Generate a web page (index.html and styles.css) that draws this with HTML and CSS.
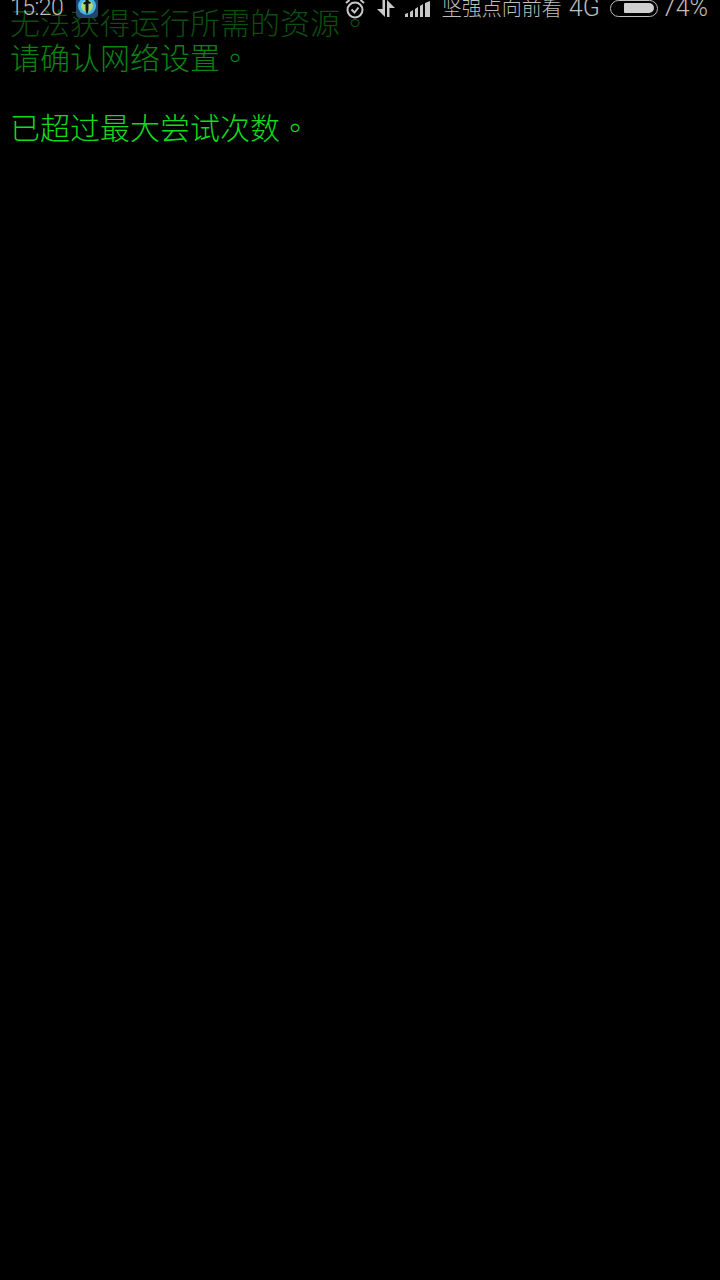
FILE: index.html
```html
<!DOCTYPE html>
<html lang="zh-CN">
<head>
<meta charset="utf-8">
<title>资源</title>
<link rel="stylesheet" href="styles.css">
</head>
<body>
<main class="log">
  <p class="line faint">无法获得运行所需的资源<span class="stop" lang="zh-TW">。</span></p>
  <p class="line mid">请确认网络设置<span class="stop" lang="zh-TW">。</span></p>
  <p class="line blank">&nbsp;</p>
  <p class="line bright">已超过最大尝试次数<span class="stop" lang="zh-TW">。</span></p>
</main>
<header class="status">
  <div class="left">
    <span class="time">15:20</span>
    <svg class="app" viewBox="0 0 22 20" width="22" height="20">
      <rect x="0" y="-3" width="22" height="23" rx="4" fill="#24456b"/>
      <circle cx="11" cy="8" r="9" fill="#45b6e8"/>
      <circle cx="11" cy="8" r="6" fill="#b9d86a"/>
      <path d="M9.500 -1h3v4l2.500 1.500-1 1.500-1.500-.5V12l-1.500 5-1.500-5V6l-1.500.5-1-1.500 2.500-1.500z" fill="#0b1418"/>
    </svg>
  </div>
  <div class="right">
    <svg class="alarm" viewBox="0 0 20 20" width="20" height="20" fill="none" stroke="#c8c8c8" stroke-width="2">
      <circle cx="10" cy="11" r="7.500"/>
      <path d="M6.500 10.500l3 3 4-5"/>
      <path d="M1 4l3.500-3M19 4l-3.500-3"/>
    </svg>
    <svg class="arrows" viewBox="0 0 18 17" width="18" height="17" fill="#c8c8c8">
      <path d="M5.500 0h2.500v17L0 9h5.500z"/>
      <path d="M10 0l8 8h-5.500v9H10z"/>
    </svg>
    <svg class="signal" viewBox="0 0 25 16" width="25" height="16" fill="#c8c8c8">
      <path d="M0 13l3-1v4H0z"/>
      <path d="M5 11l3-2v7H5z"/>
      <path d="M10 8l3-2v10h-3z"/>
      <path d="M15 5l3-2v13h-3z"/>
      <path d="M20 2l5-2v16h-5z"/>
    </svg>
    <span class="carrier">坚强点向前看</span>
    <span class="net">4G</span>
    <div class="battery"><div class="level"></div></div>
    <span class="pct">74%</span>
  </div>
</header>
</body>
</html>
```
FILE: styles.css
```css
html, body {
  margin: 0;
  padding: 0;
  width: 720px;
  height: 1280px;
  overflow: hidden;
  background: #000;
}

body {
  position: relative;
  font-family: "Noto Sans CJK SC", "Noto Sans", sans-serif;
}

.log {
  padding: 4px 0 0 10px;
}

.line {
  margin: 0;
  font-size: 30px;
  line-height: 35px;
  font-weight: 300;
  white-space: nowrap;
}

.stop {
  font-family: "Noto Sans CJK TC", sans-serif;
}

.faint { color: #0b4f0e; }
.mid { color: #0b8412; }
.bright { color: #10dc1c; }

.status {
  position: absolute;
  left: 0;
  top: -7px;
  width: 720px;
  height: 30px;
  display: flex;
  justify-content: space-between;
  align-items: flex-start;
  color: #bdbdbd;
  font-family: "Roboto", "Noto Sans CJK SC", sans-serif;
  font-weight: 300;
}

.left, .right {
  display: flex;
  align-items: flex-start;
}

.left { padding-left: 10px; }
.right { padding-right: 12px; }

.time {
  font-size: 23px;
  line-height: 30px;
  letter-spacing: -0.500px;
}

.app {
  margin: 5px 0 0 13px;
}

.alarm { margin-top: 6px; }
.arrows { margin: 7px 0 0 12px; }
.signal { margin: 8px 0 0 10px; }

.carrier {
  margin-left: 12px;
  font-family: "Noto Sans CJK SC", sans-serif;
  font-size: 20px;
  line-height: 30px;
  font-weight: 300;
}

.net {
  margin-left: 7px;
  font-size: 25px;
  line-height: 30px;
}

.battery {
  margin: 7px 0 0 10px;
  width: 48px;
  height: 17px;
  box-sizing: border-box;
  padding: 2px 3px;
  border: 1.500px solid #bdbdbd;
  border-radius: 9px;
  display: flex;
  justify-content: flex-end;
}

.level {
  width: 30px;
  height: 10px;
  background: #cfcfcf;
  border-radius: 1px 5px 5px 1px;
}

.pct {
  margin-left: 4px;
  font-size: 25px;
  line-height: 30px;
}
```
